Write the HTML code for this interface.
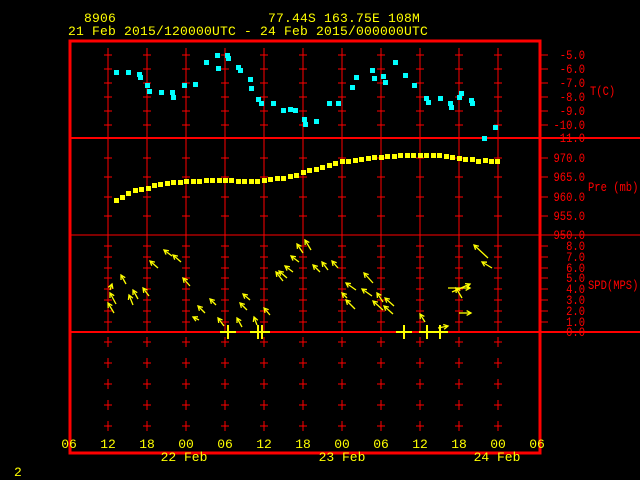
<!DOCTYPE html>
<html><head><meta charset="utf-8"><style>
html,body{margin:0;padding:0;background:#000;width:640px;height:480px;overflow:hidden}
svg{display:block}
text{font-family:"Liberation Mono","DejaVu Sans Mono",monospace;font-size:13px}
.y{fill:#ffff00}.r{fill:#ff0000}
.sm text,text.sm{font-size:12.5px}
</style></head><body>
<svg id="s" width="640" height="480" xmlns="http://www.w3.org/2000/svg">
<g id="grid" stroke="#ff0000" stroke-width="1"></g>
<rect x="70" y="41" width="470" height="412" fill="none" stroke="#ff0000" stroke-width="3"/>
<line x1="70" y1="138" x2="640" y2="138" stroke="#ff0000" stroke-width="2"/>
<line x1="70" y1="235" x2="640" y2="235" stroke="#ff0000" stroke-width="1"/>
<line x1="70" y1="332" x2="640" y2="332" stroke="#ff0000" stroke-width="2"/>
<g id="pts"></g>
<g id="wind" stroke="#ffff00" stroke-width="1.3" fill="none"></g>
<text x="84" y="22" class="y" letter-spacing="0.2">8906</text>
<text x="268" y="22" class="y" letter-spacing="0.2">77.44S  163.75E   108M</text>
<text x="68" y="35" class="y" letter-spacing="0.2">21 Feb 2015/120000UTC - 24 Feb 2015/000000UTC</text>
<g class="r sm" text-anchor="end">
<text x="585" y="59">-5.0</text><text x="585" y="73">-6.0</text><text x="585" y="87">-7.0</text><text x="585" y="101">-8.0</text><text x="585" y="115">-9.0</text><text x="585" y="129">-10.0</text><text x="585" y="142">-11.0</text>
<text x="585" y="162">970.0</text><text x="585" y="181">965.0</text><text x="585" y="201">960.0</text><text x="585" y="220">955.0</text><text x="585" y="239">950.0</text>
<text x="585" y="250">8.0</text><text x="585" y="261">7.0</text><text x="585" y="272">6.0</text><text x="585" y="282">5.0</text><text x="585" y="293">4.0</text><text x="585" y="304">3.0</text><text x="585" y="315">2.0</text><text x="585" y="326">1.0</text><text x="585" y="336">0.0</text>
</g>
<text x="590" y="95" class="r sm">T(C)</text>
<text x="588" y="191" class="r sm">Pre (mb)</text>
<text x="588" y="289" class="r sm">SPD(MPS)</text>
<g class="y" text-anchor="middle">
<text x="69" y="448">06</text><text x="108" y="448">12</text><text x="147" y="448">18</text><text x="186" y="448">00</text><text x="225" y="448">06</text><text x="264" y="448">12</text><text x="303" y="448">18</text><text x="342" y="448">00</text><text x="381" y="448">06</text><text x="420" y="448">12</text><text x="459" y="448">18</text><text x="498" y="448">00</text><text x="537" y="448">06</text>
<text x="184" y="461">22 Feb</text><text x="342" y="461">23 Feb</text><text x="497" y="461">24 Feb</text>
</g>
<text x="14" y="476" class="y">2</text>
</svg>
<script>
var NS="http://www.w3.org/2000/svg";
function el(p,n,a){var e=document.createElementNS(NS,n);for(var k in a)e.setAttribute(k,a[k]);p.appendChild(e);return e;}
document.querySelectorAll('.sm text, text.sm').forEach(function(t){t.setAttribute('textLength',t.textContent.length*6.3);t.setAttribute('lengthAdjust','spacingAndGlyphs');});
var g=document.getElementById('grid');
var ty=[55,69,83,97,111,125,158,177,197,216,246,257,268,278,289,300,311,322];
for(var i=0;i<11;i++){var x=108+39*i;
 el(g,'line',{x1:x,y1:48,x2:x,y2:332});
 ty.forEach(function(y){el(g,'line',{x1:x-4,y1:y,x2:x+4,y2:y});});
 for(var y=342;y<446;y+=21){el(g,'line',{x1:x,y1:y-5,x2:x,y2:y+5});el(g,'line',{x1:x-4,y1:y,x2:x+4,y2:y});}
}
ty.concat([138,235,332]).forEach(function(y){el(g,'line',{x1:540,y1:y,x2:548,y2:y});});
var p=document.getElementById('pts');
var cy=[[116,72],[128,72],[139,74],[140,77],[147,85],[149,91],[161,92],[172,92],[173,97],[184,85],[195,84],[206,62],[217,55],[218,68],[227,55],[228,58],[238,67],[240,70],[250,79],[251,88],[258,99],[261,103],[273,103],[283,110],[290,109],[295,110],[304,119],[305,124],[316,121],[329,103],[338,103],[352,87],[356,77],[372,70],[374,78],[383,76],[385,82],[395,62],[405,75],[414,85],[426,98],[428,102],[440,98],[450,103],[451,107],[459,97],[461,93],[471,100],[472,103],[484,138],[495,127]];
cy.forEach(function(c){el(p,'rect',{x:c[0]-2,y:c[1]-2,width:5,height:5,fill:'#00ffff'});});
var pr=[[116,200],[122,197],[128,193],[135,190],[141,189],[148,188],[154,185],[160,184],[167,183],[173,182],[180,182],[186,181],[193,181],[199,181],[206,180],[212,180],[219,180],[225,180],[231,180],[238,181],[244,181],[251,181],[257,181],[264,180],[270,179],[277,178],[283,178],[290,176],[296,175],[303,172],[309,170],[316,169],[322,167],[329,165],[335,163],[342,161],[348,161],[355,160],[361,159],[368,158],[374,157],[381,157],[387,156],[394,156],[400,155],[407,155],[413,155],[420,155],[426,155],[433,155],[439,155],[446,156],[452,157],[459,158],[465,159],[472,159],[478,161],[485,160],[491,161],[497,161]];
pr.forEach(function(c){el(p,'rect',{x:c[0]-2,y:c[1]-2,width:5,height:5,fill:'#ffff00'});});
var w=document.getElementById('wind');
var ar=[[114,313,108,303],[116,304,110,293],[126,284,121,275],[133,305,129,295],[138,299,133,290],[149,296,143,288],[158,268,150,261],[172,256,164,250],[181,262,173,255],[190,286,183,278],[199,320,193,317],[205,313,198,306],[216,305,210,299],[224,326,218,318],[242,327,237,318],[247,310,240,303],[250,300,243,294],[257,325,254,317],[270,315,264,308],[283,281,276,272],[287,278,279,271],[293,272,285,266],[299,262,291,256],[303,253,297,244],[311,250,305,240],[320,272,313,265],[328,270,322,262],[338,268,332,261],[356,290,346,283],[347,298,342,293],[355,309,346,300],[373,283,364,273],[372,296,362,289],[383,302,377,293],[383,310,373,301],[394,306,385,298],[393,314,384,306],[425,322,420,314],[438,328,448,326],[448,288,470,288],[452,292,470,284],[462,298,456,288],[488,258,474,245],[492,268,482,262],[459,313,471,313],[110,290,112,284]];
ar.forEach(function(a){var dx=a[2]-a[0],dy=a[3]-a[1],L=Math.sqrt(dx*dx+dy*dy),ux=dx/L,uy=dy/L,h=5;
 el(w,'line',{x1:a[0],y1:a[1],x2:a[2],y2:a[3]});
 var c=Math.cos(0.5),s=Math.sin(0.5);
 el(w,'polyline',{points:(a[2]-h*(ux*c-uy*s))+','+(a[3]-h*(uy*c+ux*s))+' '+a[2]+','+a[3]+' '+(a[2]-h*(ux*c+uy*s))+','+(a[3]-h*(uy*c-ux*s))});});
[228,258,262,404,427,440].forEach(function(x){el(w,'line',{x1:x,y1:325,x2:x,y2:339,'stroke-width':2});el(w,'line',{x1:x-8,y1:332,x2:x+8,y2:332,'stroke-width':2});});
</script>
</body></html>
